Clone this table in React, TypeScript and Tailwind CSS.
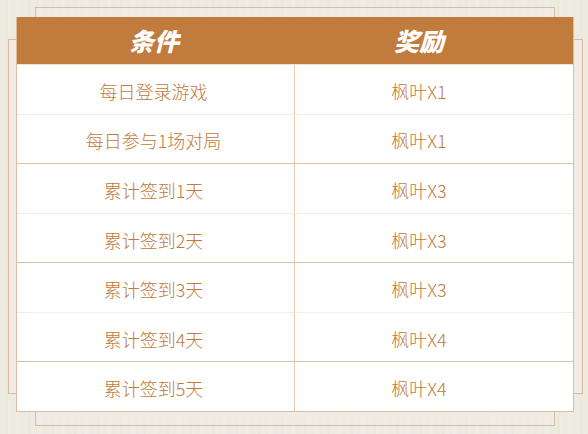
const rows = [
  { cond: '每日登录游戏', reward: '枫叶X1' },
  { cond: '每日参与1场对局', reward: '枫叶X1' },
  { cond: '累计签到1天', reward: '枫叶X3' },
  { cond: '累计签到2天', reward: '枫叶X3' },
  { cond: '累计签到3天', reward: '枫叶X3' },
  { cond: '累计签到4天', reward: '枫叶X4' },
  { cond: '累计签到5天', reward: '枫叶X4' },
];

export default function App() {
  return (
    <div
      className="grid w-[588px] h-[434px] overflow-hidden bg-[#ecE9df] bg-[repeating-linear-gradient(90deg,#edeae1_0px,#eeebe2_5px,#e9e6dc_6px,#efece4_9px,#ecE9df_14px,#f0ede5_17px,#ebe8de_23px)]"
      style={{ fontFamily: '"Noto Sans CJK SC", "Noto Sans", sans-serif' }}
    >
      {/* paper layers behind the table */}
      <div className="col-start-1 row-start-1 ml-[35px] mt-[7px] w-[520px] h-[419px] border border-[#d9bc9c] bg-[#f1eee7]/50" />
      <div className="col-start-1 row-start-1 ml-[8px] mt-[39px] w-[575px] h-[355px] border border-[#d9bc9c] bg-[#f1eee7]/50" />

      {/* table */}
      <div className="col-start-1 row-start-1 ml-[16px] mt-[17px] w-[558px] h-[395px] flex flex-col border-x border-b border-[#dcbd9c] bg-white">
        <div className="h-[48px] shrink-0 grid grid-cols-[278px_1fr] bg-[#c07b3d] border-b border-[#f3e2d1]">
          <div className="flex items-center justify-center pr-[4px] text-white text-[25px] font-black italic">条件</div>
          <div className="flex items-center justify-center pr-[30px] text-white text-[25px] font-black italic">奖励</div>
        </div>
        <div className="flex-1 flex flex-col">
          {rows.map((r, i) => (
            <div
              key={i}
              className={
                'flex-1 grid grid-cols-[278px_1fr] text-[18px] font-light text-[#c07a3c] ' +
                (i === rows.length - 1 ? '' : i % 2 === 0 ? 'border-b border-[#f6ebe0]' : 'border-b border-[#dfc3a6]')
              }
            >
              <div className="flex items-center justify-center pt-[4px] pr-[4px] border-r border-[#eccbab]">{r.cond}</div>
              <div className="flex items-center justify-center pt-[4px] pr-[30px]">{r.reward}</div>
            </div>
          ))}
        </div>
      </div>
    </div>
  );
}
